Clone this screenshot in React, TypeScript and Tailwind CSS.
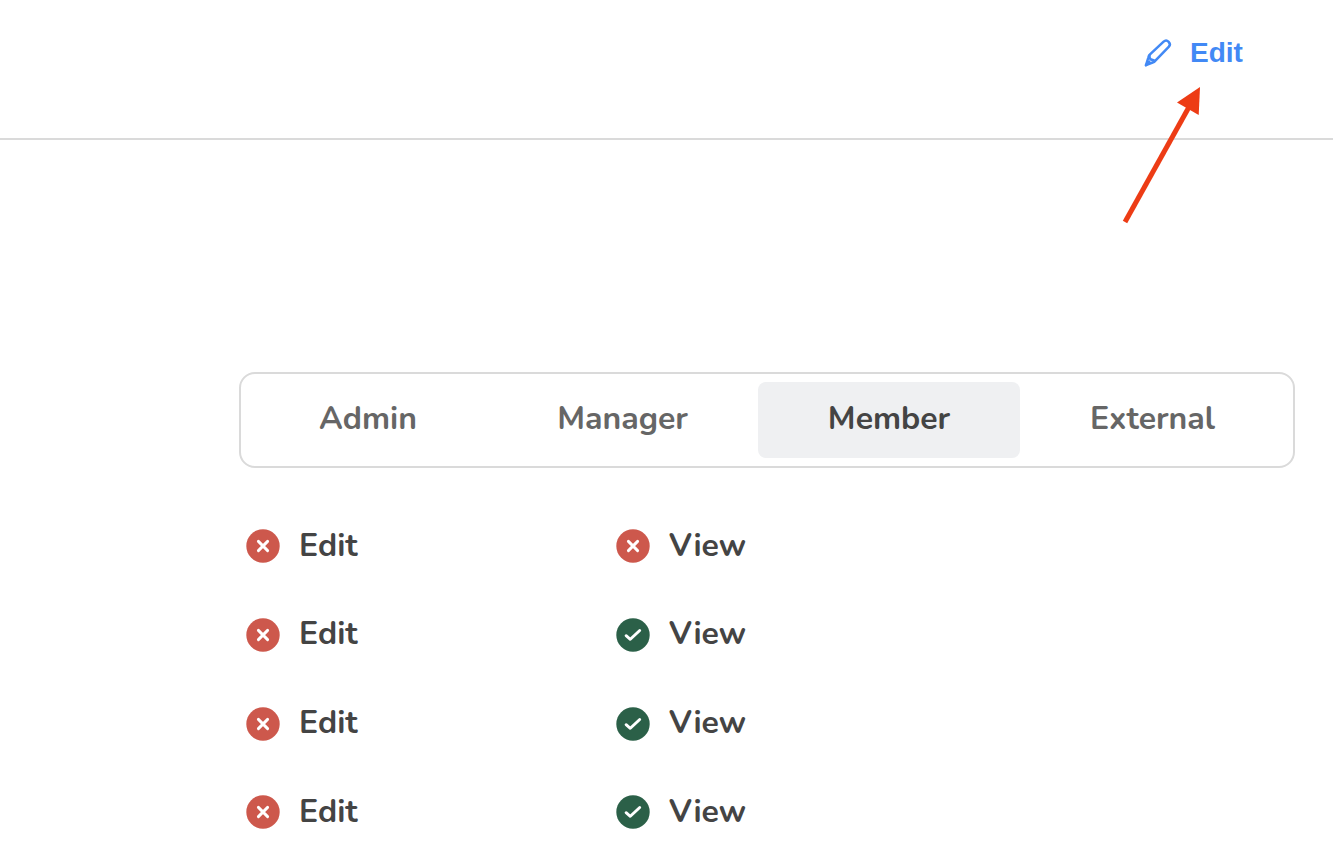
const labelFont = "font-['Nunito','Lato',sans-serif] font-bold";

type Tab = { name: string; width: string };

const tabs: Tab[] = [
  { name: 'Admin', width: 'w-[238px]' },
  { name: 'Manager', width: 'w-[271px]' },
  { name: 'Member', width: 'w-[262px]' },
  { name: 'External', width: 'w-[265px]' },
];

const permissions = [
  { edit: false, view: false, height: 'h-[89px]', lift: 'pb-0' },
  { edit: false, view: true, height: 'h-[89px]', lift: 'pb-0.5' },
  { edit: false, view: true, height: 'h-[88px]', lift: 'pb-0.5' },
  { edit: false, view: true, height: 'h-[34px]', lift: 'pb-0' },
];

function StatusIcon({ allowed }: { allowed: boolean }) {
  return (
    <svg className="size-[34px] shrink-0" viewBox="0 0 34 34" fill="none" stroke="white" strokeWidth="2.9" strokeLinecap="round" strokeLinejoin="round">
      <circle cx="17" cy="17" r="16.7" fill={allowed ? '#2b6048' : '#cd584c'} stroke="none" />
      {allowed ? <path d="M10.1 17.7 14.3 21.3 23.7 12.5" /> : <path d="M12.4 12.4 21.6 21.6M21.6 12.4 12.4 21.6" />}
    </svg>
  );
}

function Permission({ allowed, label, lift }: { allowed: boolean; label: string; lift: string }) {
  return (
    <div className="flex h-[34px] w-[370px] items-center">
      <StatusIcon allowed={allowed} />
      <span className={`ml-[19px] text-[32px] leading-[34px] text-[#444444] ${labelFont} ${lift}`}>{label}</span>
    </div>
  );
}

function PencilIcon() {
  return (
    <svg className="size-8" viewBox="0 0 32 32" fill="none" stroke="currentColor" strokeWidth="2.5" strokeLinecap="round" strokeLinejoin="round">
      <path d="M8 18.4 21.6 5.6C25 2.5 30 7.4 26.7 10.9L13.4 24.6Q12.2 26 10.6 26.5L4 29.2 6.2 22Q6.7 19.7 8 18.4Z" />
      <path d="M7.4 19.6C7.4 22 8 23.1 9 23.5S12 23.8 12.4 25.2M4 29.2 7.2 25.6" />
    </svg>
  );
}

export default function App() {
  return (
    <div className="relative h-[866px] w-[1333px] overflow-hidden bg-white">
      <header className="flex h-[140px] items-start justify-end border-b-2 border-[#dadada] pt-9 pr-[89px]">
        <button className="flex items-start gap-4 text-[#4289f5]">
          <PencilIcon />
          <span className="w-[54px] pt-px text-left font-['Liberation_Sans',Arial,sans-serif] text-[28px] leading-8 font-bold whitespace-nowrap">Edit</span>
        </button>
      </header>

      <main className="ml-[239px] pt-[232px]">
        <div className="flex h-24 w-[1056px] rounded-[16px] border-2 border-[#dadada] p-2">
          {tabs.map((tab) => (
            <button
              key={tab.name}
              className={`h-[76px] rounded-lg pb-0.5 text-[32px] leading-10 ${labelFont} ${tab.width} ${
                tab.name === 'Member' ? 'bg-[#eff0f2] text-[#444444]' : 'text-[#666666]'
              }`}
            >
              {tab.name}
            </button>
          ))}
        </div>

        <div className="mt-[61px] ml-[7px] flex flex-col">
          {permissions.map((row, index) => (
            <div key={index} className={`flex ${row.height}`}>
              <Permission allowed={row.edit} label="Edit" lift={row.lift} />
              <Permission allowed={row.view} label="View" lift={row.lift} />
            </div>
          ))}
        </div>
      </main>

      <svg className="absolute top-[80px] left-[1110px] h-[150px] w-[100px]" viewBox="0 0 100 150">
        <path d="M15 142 79 27" stroke="#ed3c15" strokeWidth="5" />
        <path d="M90 7 67 22.5 88.7 35Z" fill="#ed3c15" />
      </svg>
    </div>
  );
}
